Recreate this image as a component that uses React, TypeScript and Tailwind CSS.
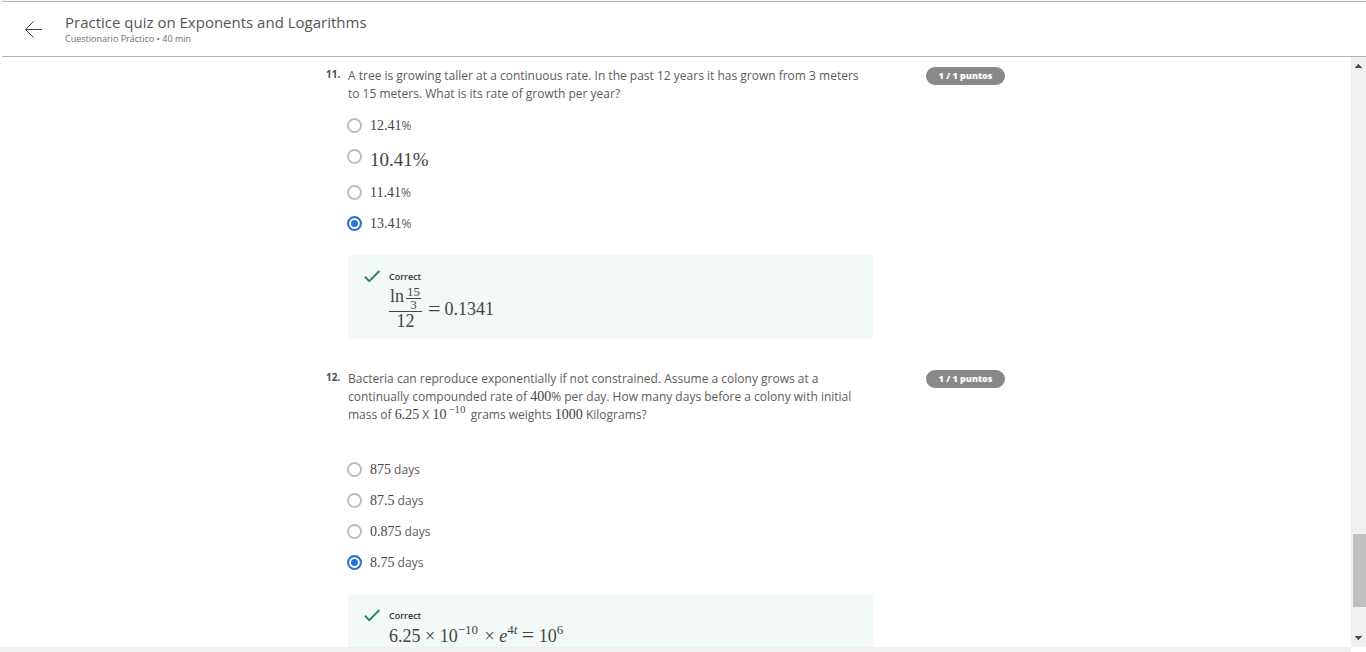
import { ReactNode } from "react";

const serif = "font-['Liberation_Serif',serif]";

function Num({ children }: { children: ReactNode }) {
  return <span className={`${serif} text-sm leading-none text-[#444]`}>{children}</span>;
}

function Sup({ children }: { children: ReactNode }) {
  return <sup className="-top-2 text-[13px]">{children}</sup>;
}

type Choice = { id: string; label: ReactNode; tall?: boolean };

function Choices({ name, choices, selected }: { name: string; choices: Choice[]; selected: string }) {
  return (
    <div role="radiogroup" aria-labelledby={`${name}-prompt`} className="flex flex-col">
      {choices.map((c) => (
        <label
          key={c.id}
          htmlFor={`${name}-${c.id}`}
          className={c.tall ? "flex h-9 items-start gap-2" : "flex h-[31px] items-start gap-2"}
        >
          <input
            type="radio"
            id={`${name}-${c.id}`}
            name={name}
            defaultChecked={c.id === selected}
            className="mt-2 -ml-px size-[15px] shrink-0 appearance-none rounded-full border-2 border-[#bdbdbd] bg-white checked:border-[#2a73cc] checked:bg-[#2a73cc] checked:shadow-[inset_0_0_0_2px_white]"
          />
          <span className={c.tall ? "leading-[38px]" : "leading-[31px]"}>{c.label}</span>
        </label>
      ))}
    </div>
  );
}

function Feedback({ children }: { children: ReactNode }) {
  return (
    <div className="mt-4 flex gap-[9px] bg-[#f3f9f7] px-4 pt-3.5 pb-2">
      <svg viewBox="0 0 16 16" className="size-4 shrink-0" fill="none" stroke="#1d8450" strokeWidth="1.8" aria-hidden="true">
        <path d="M1 7.7 L5.2 12.2 L15.4 2" />
      </svg>
      <div>
        <div className="text-[9px] leading-4 font-semibold text-[#333]">Correct</div>
        {children}
      </div>
    </div>
  );
}

function Question({
  number,
  name,
  prompt,
  children,
}: {
  number: number;
  name: string;
  prompt: ReactNode;
  children: ReactNode;
}) {
  return (
    <section className="flex items-start">
      <div className="w-[22px] shrink-0 text-[10px] leading-[14px] font-bold text-[#4a4a4a]">{number}.</div>
      <div className="min-w-0 flex-1">
        <p id={`${name}-prompt`} className="text-xs leading-[18px]">
          {prompt}
        </p>
        {children}
      </div>
      <span className="ml-[53px] w-[79px] shrink-0 rounded-full bg-[#888] text-center text-[9px] leading-[18px] font-extrabold text-white">
        1 / 1 puntos
      </span>
    </section>
  );
}

export default function App() {
  return (
    <div className="flex h-screen flex-col overflow-hidden bg-white font-['Open_Sans',sans-serif] text-xs text-[#5c5c5c]">
      <div className="h-px shrink-0 bg-[#f4f4f4]" />
      <header className="ml-0.5 flex h-14 shrink-0 items-center border-y border-[#b5b5b5] pl-[23px]">
        <button type="button" aria-label="Back" className="mr-[22px] block">
          <svg viewBox="0 0 18 18" className="size-[18px]" fill="none" stroke="#444" strokeWidth="1" aria-hidden="true">
            <path d="M17 9.5 H0.7 M8.5 1.5 L0.5 9.5 L8.5 17.5" />
          </svg>
        </button>
        <div className="pb-0.5">
          <h1 className="pb-px text-[15px] leading-5 text-[#555]">Practice quiz on Exponents and Logarithms</h1>
          <p className="text-[9px] leading-3 text-[#707070]">Cuestionario Práctico • 40 min</p>
        </div>
      </header>

      <div className="flex min-h-0 flex-1">
        <div className="flex min-w-0 flex-1 flex-col">
          <main className="min-h-0 flex-1 overflow-hidden pr-5 pt-2.5">
            <div className="mx-auto flex max-w-[679px] flex-col gap-[31px]">
              <Question
                number={11}
                name="q11"
                prompt="A tree is growing taller at a continuous rate. In the past 12 years it has grown from 3 meters to 15 meters. What is its rate of growth per year?"
              >
                <div className="mt-[7px]">
                  <Choices
                    name="q11"
                    selected="d"
                    choices={[
                      { id: "a", label: <><Num>12.41</Num>%</> },
                      {
                        id: "b",
                        tall: true,
                        label: <span className={`${serif} text-[19px] text-[#444]`}>10.41%</span>,
                      },
                      { id: "c", label: <><Num>11.41</Num>%</> },
                      { id: "d", label: <><Num>13.41</Num>%</> },
                    ]}
                  />
                </div>
                <Feedback>
                  <div className={`${serif} flex items-center pt-px text-lg text-[#444]`}>
                    <div className="flex flex-col items-center">
                      <div className="flex items-center gap-0.5 border-b border-[#444] px-px leading-[22px]">
                        <span className="-mt-1.5">ln</span>
                        <span className="flex flex-col items-center text-[13px] leading-3">
                          <span className="border-b border-[#444] px-px">15</span>
                          <span>3</span>
                        </span>
                      </div>
                      <div className="leading-[19px]">12</div>
                    </div>
                    <span className="ml-1.5 text-[22px] leading-5">=</span>
                    <span className="ml-1 leading-5">0.1341</span>
                  </div>
                </Feedback>
              </Question>

              <Question
                number={12}
                name="q12"
                prompt={
                  <>
                    Bacteria can reproduce exponentially if not constrained. Assume a colony grows at a continually
                    compounded rate of <Num>400</Num>% per day. How many days before a colony with initial mass of{" "}
                    <Num>6.25</Num> X <Num>10</Num>
                    <sup className={`${serif} -top-1.5 mr-0.5 ml-0.5 text-[11px] text-[#555]`}>−10</sup> grams weights{" "}
                    <Num>1000</Num> Kilograms?
                  </>
                }
              >
                <div className="mt-[30px]">
                  <Choices
                    name="q12"
                    selected="d"
                    choices={[
                      { id: "a", label: <><Num>875</Num> days</> },
                      { id: "b", label: <><Num>87.5</Num> days</> },
                      { id: "c", label: <><Num>0.875</Num> days</> },
                      { id: "d", label: <><Num>8.75</Num> days</> },
                    ]}
                  />
                </div>
                <Feedback>
                  <div className={`${serif} text-lg leading-6 whitespace-nowrap text-[#444]`}>
                    6.25 × 10<Sup>−10</Sup>
                    <span className="ml-0.5"> × </span>
                    <i>e</i>
                    <Sup>
                      4<i>t</i>
                    </Sup>{" "}
                    <span className="text-[22px] leading-none">=</span> 10<Sup>6</Sup>
                  </div>
                </Feedback>
              </Question>
            </div>
          </main>
          <div className="h-[5px] shrink-0 bg-[#f0f0f0]" />
        </div>

        <div aria-hidden="true" className="mb-[5px] flex w-[15px] shrink-0 flex-col items-center bg-[#f0f0f0] py-[7px]">
          <svg viewBox="0 0 7 4" className="h-1 w-[7px] shrink-0" fill="#505050" shapeRendering="crispEdges">
            <path d="M3 0h1v1h1v1h1v1h1v1H0V3h1V2h1V1h1z" />
          </svg>
          <div className="flex min-h-0 w-full flex-1 flex-col pl-0.5">
            <div className="flex-[466]" />
            <div className="flex-[73] bg-[#c0c0c0]" />
            <div className="flex-[29]" />
          </div>
          <svg viewBox="0 0 7 4" className="h-1 w-[7px] shrink-0" fill="#505050" shapeRendering="crispEdges">
            <path d="M0 0h7v1H6v1H5v1H4v1H3V3H2V2H1V1H0z" />
          </svg>
        </div>
      </div>
    </div>
  );
}
